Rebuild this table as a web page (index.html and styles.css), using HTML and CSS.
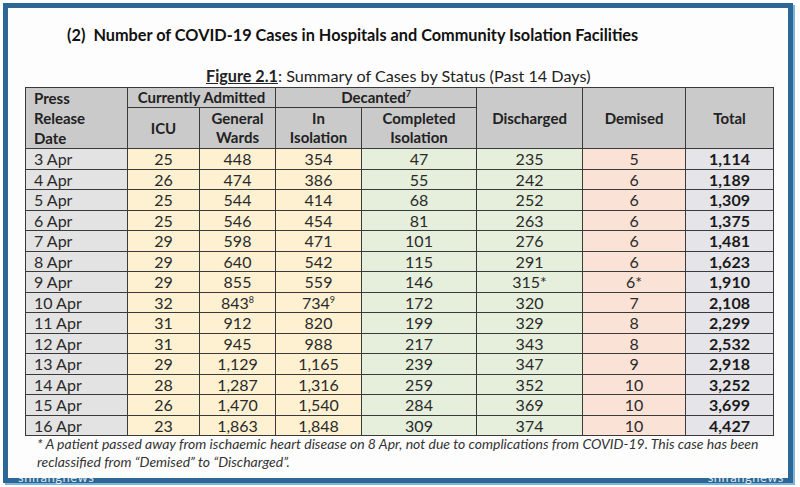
FILE: index.html
```html
<!DOCTYPE html>
<html>
<head>
<meta charset="utf-8">
<link rel="stylesheet" href="styles.css">
</head>
<body>
<div class="frame">
  <h1 class="title"><span class="num">(2)</span>Number of COVID-19 Cases in Hospitals and Community Isolation Facilities</h1>
  <p class="caption"><span class="fig">Figure 2.1</span>: Summary of Cases by Status (Past 14 Days)</p>
  <table class="cases">
    <colgroup>
      <col class="c-date"><col class="c-icu"><col class="c-ward"><col class="c-iso"><col class="c-comp"><col class="c-dis"><col class="c-dem"><col class="c-tot">
    </colgroup>
    <thead>
      <tr class="h1">
        <th rowspan="2" class="hdate">Press<br>Release<br>Date</th>
        <th colspan="2">Currently Admitted</th>
        <th colspan="2">Decanted<sup>7</sup></th>
        <th rowspan="2">Discharged</th>
        <th rowspan="2">Demised</th>
        <th rowspan="2">Total</th>
      </tr>
      <tr class="h2">
        <th>ICU</th>
        <th>General<br>Wards</th>
        <th>In<br>Isolation</th>
        <th>Completed<br>Isolation</th>
      </tr>
    </thead>
    <tbody>
      <tr><td class="d">3 Apr</td><td class="y">25</td><td class="y">448</td><td class="y">354</td><td class="g">47</td><td class="g">235</td><td class="p">5</td><td class="t">1,114</td></tr>
      <tr><td class="d">4 Apr</td><td class="y">26</td><td class="y">474</td><td class="y">386</td><td class="g">55</td><td class="g">242</td><td class="p">6</td><td class="t">1,189</td></tr>
      <tr><td class="d">5 Apr</td><td class="y">25</td><td class="y">544</td><td class="y">414</td><td class="g">68</td><td class="g">252</td><td class="p">6</td><td class="t">1,309</td></tr>
      <tr><td class="d">6 Apr</td><td class="y">25</td><td class="y">546</td><td class="y">454</td><td class="g">81</td><td class="g">263</td><td class="p">6</td><td class="t">1,375</td></tr>
      <tr><td class="d">7 Apr</td><td class="y">29</td><td class="y">598</td><td class="y">471</td><td class="g">101</td><td class="g">276</td><td class="p">6</td><td class="t">1,481</td></tr>
      <tr><td class="d">8 Apr</td><td class="y">29</td><td class="y">640</td><td class="y">542</td><td class="g">115</td><td class="g">291</td><td class="p">6</td><td class="t">1,623</td></tr>
      <tr><td class="d">9 Apr</td><td class="y">29</td><td class="y">855</td><td class="y">559</td><td class="g">146</td><td class="g">315*</td><td class="p">6*</td><td class="t">1,910</td></tr>
      <tr><td class="d">10 Apr</td><td class="y">32</td><td class="y">843<sup>8</sup></td><td class="y">734<sup>9</sup></td><td class="g">172</td><td class="g">320</td><td class="p">7</td><td class="t">2,108</td></tr>
      <tr><td class="d">11 Apr</td><td class="y">31</td><td class="y">912</td><td class="y">820</td><td class="g">199</td><td class="g">329</td><td class="p">8</td><td class="t">2,299</td></tr>
      <tr><td class="d">12 Apr</td><td class="y">31</td><td class="y">945</td><td class="y">988</td><td class="g">217</td><td class="g">343</td><td class="p">8</td><td class="t">2,532</td></tr>
      <tr><td class="d">13 Apr</td><td class="y">29</td><td class="y">1,129</td><td class="y">1,165</td><td class="g">239</td><td class="g">347</td><td class="p">9</td><td class="t">2,918</td></tr>
      <tr><td class="d">14 Apr</td><td class="y">28</td><td class="y">1,287</td><td class="y">1,316</td><td class="g">259</td><td class="g">352</td><td class="p">10</td><td class="t">3,252</td></tr>
      <tr><td class="d">15 Apr</td><td class="y">26</td><td class="y">1,470</td><td class="y">1,540</td><td class="g">284</td><td class="g">369</td><td class="p">10</td><td class="t">3,699</td></tr>
      <tr><td class="d">16 Apr</td><td class="y">23</td><td class="y">1,863</td><td class="y">1,848</td><td class="g">309</td><td class="g">374</td><td class="p">10</td><td class="t">4,427</td></tr>
    </tbody>
  </table>
  <p class="note">* A patient passed away from ischaemic heart disease on 8 Apr, not due to complications from COVID-19. This case has been<br>reclassified from “Demised” to “Discharged”.</p>
  <span class="wm wm-left">shifangnews</span>
  <span class="wm wm-right">shifangnews</span>
</div>
</body>
</html>
```

FILE: styles.css
```css
html, body {
  margin: 0;
  padding: 0;
  background: #ffffff;
}
body {
  width: 800px;
  height: 487px;
  overflow: hidden;
  font-family: Lato, "Open Sans", sans-serif;
  color: #1e1e1e;
}
.frame {
  position: relative;
  box-sizing: border-box;
  margin: 3px 0 0 3px;
  width: 790px;
  height: 480px;
  border: 5px solid #2b6897;
  box-shadow: 2px 2px 0 #7fb5d8;
  background: #fdfdfd;
  padding: 0;
}
.title {
  margin: 0;
  padding: 17px 0 0 59px;
  height: 25px;
  font-size: 16.3px;
  font-weight: 700;
  line-height: 20px;
  color: #111;
  white-space: nowrap;
}
.title .num {
  margin-right: 8px;
}
.caption {
  margin: 16px 0 0 198px;
  height: 20px;
  font-size: 16.2px;
  line-height: 20px;
  color: #222;
  white-space: nowrap;
}
.caption .fig {
  font-weight: 700;
  text-decoration: underline;
}
.cases {
  margin: 1px 0 0 17px;
  border-collapse: collapse;
  table-layout: fixed;
  width: 748px;
  font-size: 16px;
  color: #2a2a2a;
}
.c-date { width: 102px; }
.c-icu { width: 72px; }
.c-ward { width: 76px; }
.c-iso { width: 86px; }
.c-comp { width: 115px; }
.c-dis { width: 106px; }
.c-dem { width: 103px; }
.c-tot { width: 88px; }
.cases th, .cases td {
  border: 1px solid #3a3a3a;
  padding: 0;
  text-align: center;
  white-space: nowrap;
}
.cases th {
  background: #cacaca;
  font-weight: 700;
  font-size: 15px;
  line-height: 19px;
  color: #222;
}
.cases .h1 { height: 20px; }
.cases .h2 { height: 40px; }
.cases th.hdate {
  text-align: left;
  vertical-align: top;
  padding: 0 0 0 8px;
  line-height: 20px;
}
.cases td {
  height: 19.5px;
  line-height: 19px;
}
.cases sup {
  font-size: 9px;
  line-height: 0;
  vertical-align: 6px;
}
.cases td.d {
  text-align: left;
  padding-left: 8px;
  background: #e3e3e3;
}
.cases td.y { background: #fdf1d2; }
.cases td.g { background: #e5efdc; }
.cases td.p { background: #fbe2d6; }
.cases td.t {
  background: #e5e5e9;
  font-weight: 700;
  color: #1a1a1a;
}
.note {
  margin: -1px 0 0 29px;
  font-size: 14px;
  font-style: italic;
  line-height: 18px;
  color: #333;
  white-space: nowrap;
}
.wm {
  position: absolute;
  bottom: -5px;
  font-size: 13px;
  line-height: 12px;
  color: rgba(255, 255, 255, 0.85);
  letter-spacing: 0.5px;
}
.wm-left { left: 10px; }
.wm-right { right: 4px; }
```
